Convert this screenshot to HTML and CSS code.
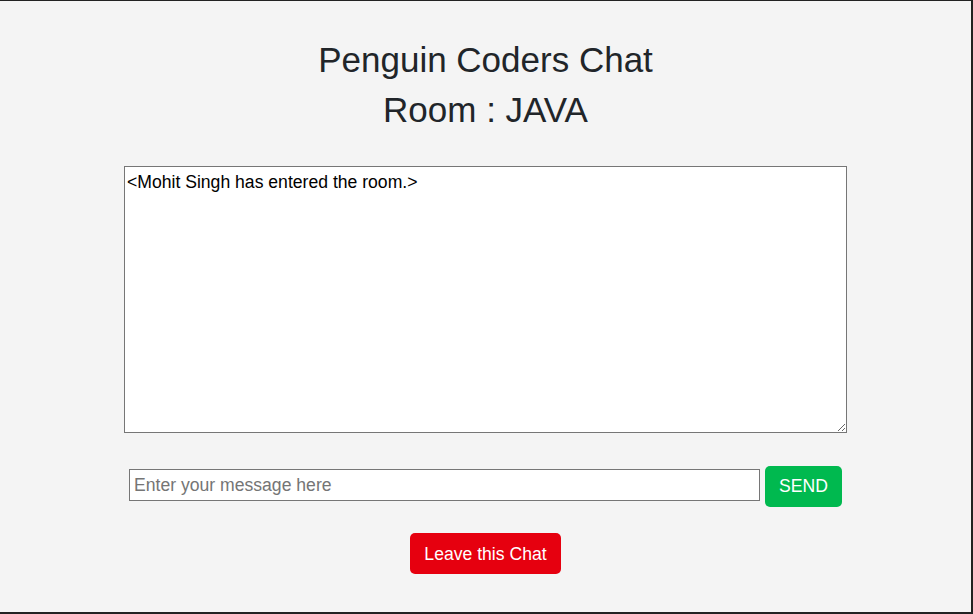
FILE: index.html
```html
<!DOCTYPE html>
<html lang="en">
<head>
<meta charset="utf-8">
<title>Penguin Coders Chat</title>
<link rel="stylesheet" href="styles.css">
</head>
<body>
<div class="page">
  <h1 class="title">Penguin Coders Chat</h1>
  <h2 class="title">Room : JAVA</h2>
  <textarea class="chat-log">&lt;Mohit Singh has entered the room.&gt;</textarea>
  <div class="send-row">
    <input class="msg-input" type="text" placeholder="Enter your message here">
    <button class="btn btn-send">SEND</button>
  </div>
  <button class="btn btn-leave">Leave this Chat</button>
</div>
</body>
</html>
```
FILE: styles.css
```css
html, body {
  margin: 0;
  padding: 0;
}
body {
  font-family: "Liberation Sans", Arial, sans-serif;
  background: #f4f4f4;
}
.page {
  box-sizing: border-box;
  width: 973px;
  height: 614px;
  background: #f4f4f4;
  border-top: 1px solid #222;
  border-right: 2px solid #222;
  border-bottom: 2px solid #222;
  padding-top: 34px;
  display: flex;
  flex-direction: column;
  align-items: center;
}
.title {
  margin: 0;
  font-size: 35px;
  line-height: 50px;
  font-weight: normal;
  color: #212529;
  text-align: center;
}
.chat-log {
  box-sizing: border-box;
  margin: 31px 0 0 0;
  width: 723px;
  height: 267px;
  border: 1px solid #767676;
  background: #fff;
  color: #000;
  padding: 2px;
  font-family: "Liberation Sans", Arial, sans-serif;
  font-size: 17.6px;
  line-height: 1.5;
}
.send-row {
  margin: 33px 0 0 0;
  display: flex;
  align-items: center;
  gap: 5px;
}
.msg-input {
  box-sizing: border-box;
  width: 631px;
  height: 32px;
  margin-top: -3px;
  border: 1px solid #767676;
  background: #fff;
  padding: 1px 4px;
  font-family: "Liberation Sans", Arial, sans-serif;
  font-size: 17.6px;
  color: #000;
}
.msg-input::placeholder {
  color: #757575;
}
.btn {
  border: none;
  border-radius: 5px;
  color: #fff;
  font-family: "Liberation Sans", Arial, sans-serif;
  font-size: 17.6px;
  line-height: 21px;
  padding: 10px 14px;
  cursor: pointer;
}
.btn-send {
  width: 77px;
  background: #00b94f;
}
.btn-leave {
  margin: 26px 0 0 0;
  padding: 11px 14px 9px;
  width: 151px;
  background: #e6000f;
}
```
